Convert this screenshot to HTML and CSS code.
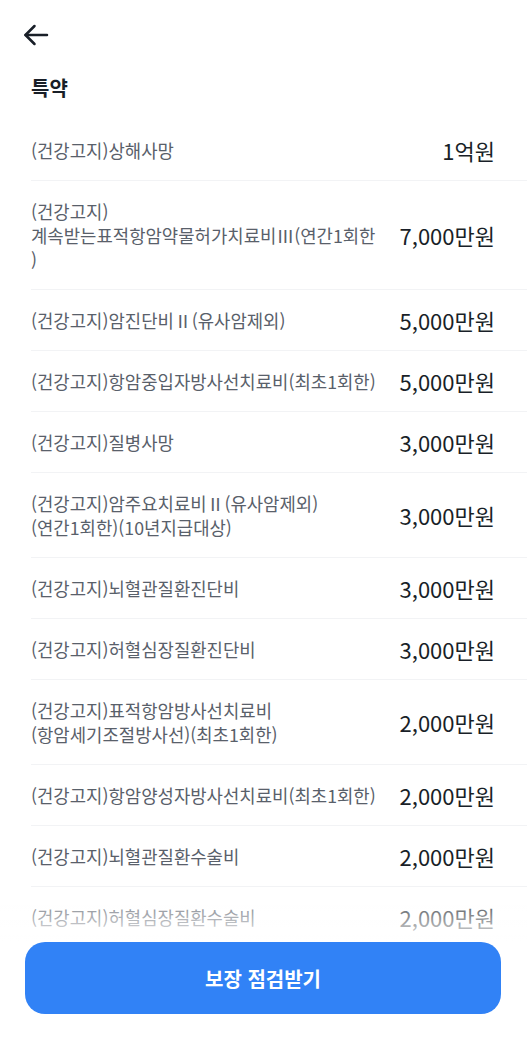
FILE: index.html
```html
<!DOCTYPE html>
<html lang="ko">
<head>
<meta charset="utf-8">
<link rel="stylesheet" href="styles.css">
</head>
<body>
<header class="top-bar">
  <svg class="back" width="28" height="28" viewBox="0 0 28 28" fill="none" stroke="#191f28" stroke-width="2.5" stroke-linecap="round" stroke-linejoin="round">
    <path d="M25 14H3.5"/>
    <path d="M12.5 5L3.5 14L12.5 23"/>
  </svg>
</header>
<main>
  <h2 class="section-title">특약</h2>
  <ul class="list">
    <li class="row"><span class="label">(건강고지)상해사망</span><span class="value">1억원</span></li>
    <li class="row"><span class="label">(건강고지)<br>계속받는표적항암약물허가치료비Ⅲ(연간1회한<br>)</span><span class="value">7,000만원</span></li>
    <li class="row"><span class="label">(건강고지)암진단비Ⅱ(유사암제외)</span><span class="value">5,000만원</span></li>
    <li class="row"><span class="label">(건강고지)항암중입자방사선치료비(최초1회한)</span><span class="value">5,000만원</span></li>
    <li class="row"><span class="label">(건강고지)질병사망</span><span class="value">3,000만원</span></li>
    <li class="row"><span class="label">(건강고지)암주요치료비Ⅱ(유사암제외)<br>(연간1회한)(10년지급대상)</span><span class="value">3,000만원</span></li>
    <li class="row"><span class="label">(건강고지)뇌혈관질환진단비</span><span class="value">3,000만원</span></li>
    <li class="row"><span class="label">(건강고지)허혈심장질환진단비</span><span class="value">3,000만원</span></li>
    <li class="row"><span class="label">(건강고지)표적항암방사선치료비<br>(항암세기조절방사선)(최초1회한)</span><span class="value">2,000만원</span></li>
    <li class="row"><span class="label">(건강고지)항암양성자방사선치료비(최초1회한)</span><span class="value">2,000만원</span></li>
    <li class="row"><span class="label">(건강고지)뇌혈관질환수술비</span><span class="value">2,000만원</span></li>
    <li class="row"><span class="label">(건강고지)허혈심장질환수술비</span><span class="value">2,000만원</span></li>
    <li class="row"><span class="label">(건강고지)질병수술비</span><span class="value">1,000만원</span></li>
  </ul>
</main>
<div class="bottom-cta">
  <button class="cta-button" type="button">보장 점검받기</button>
</div>
</body>
</html>
```

FILE: styles.css
```css
* { box-sizing: border-box; }

html, body {
  margin: 0;
  padding: 0;
  background: #ffffff;
  font-family: "Noto Sans CJK KR", "Noto Sans", sans-serif;
  color: #191f28;
}

.top-bar {
  height: 64px;
  display: flex;
  align-items: center;
  padding: 0 0 0 22px;
}

.back {
  display: block;
  margin-top: 6px;
}

.section-title {
  margin: 0;
  padding: 10px 0 0 31px;
  font-size: 20px;
  font-weight: 700;
  line-height: 28px;
  color: #191f28;
}

.list {
  list-style: none;
  margin: 0;
  padding: 18px 0 120px 31px;
}

.row {
  display: flex;
  align-items: center;
  justify-content: space-between;
  gap: 16px;
  padding: 18px 32px 18px 0;
  border-bottom: 1px solid #f2f3f5;
}

.label {
  font-size: 17.8px;
  line-height: 24px;
  color: #59606a;
}

.value {
  flex-shrink: 0;
  font-size: 22px;
  line-height: 24px;
  color: #191f28;
}

.bottom-cta {
  position: fixed;
  left: 0;
  right: 0;
  bottom: 0;
  padding: 0 26px 26px 25px;
  background: #ffffff;
}

.bottom-cta::before {
  content: "";
  position: absolute;
  left: 0;
  right: 0;
  top: -44px;
  height: 44px;
  background: linear-gradient(to bottom, rgba(255,255,255,0.2), rgba(255,255,255,0.9));
}

.cta-button {
  display: block;
  width: 100%;
  height: 72px;
  border: none;
  border-radius: 20px;
  background: #3182f6;
  color: #ffffff;
  font-family: "Noto Sans CJK KR", "Noto Sans", sans-serif;
  font-size: 20px;
  font-weight: 700;
}
```
